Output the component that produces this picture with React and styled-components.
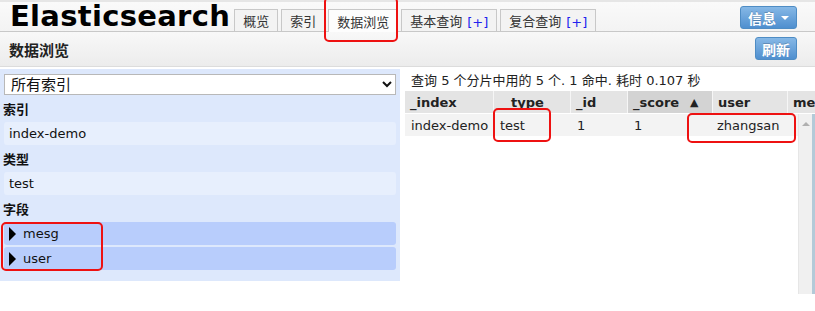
import React from 'react'
import styled, { createGlobalStyle } from 'styled-components'

const GlobalStyle = createGlobalStyle`
	body {
		margin: 0;
		background: #fff;
		font-family: "DejaVu Sans", Verdana, "Noto Sans CJK SC", sans-serif;
		font-size: 13px;
		color: #222;
	}
`

const Page = styled('div')`
	position: relative;
	width: 815px;
	height: 311px;
	overflow: hidden;
`

const Header = styled('div')`
	display: flex;
	align-items: flex-end;
	height: 29px;
	padding: 0 18px 0 10px;
	background: linear-gradient(#fafafa, #f3f3f3);
	border-top: 2px solid #e6e6e6;
	border-bottom: 1px solid #c8c8c8;
`

const Title = styled('h1')`
	align-self: center;
	margin: 0;
	font-size: 29px;
	letter-spacing: 0.3px;
	font-weight: bold;
	line-height: 29px;
	color: #000;
	white-space: nowrap;
`

const Tabs = styled('div')`
	display: flex;
	gap: 3px;
	margin-left: 4px;
`

const Tab = styled('div')`
	display: flex;
	align-items: flex-end;
	padding: 0 8px 1px;
	border: 1px solid #c8c8c8;
	border-bottom: none;
	background: ${p => (p.$active ? '#fdfdfd' : '#f3f3f3')};
	color: #333;
	font-size: 13px;
	margin-bottom: ${p => (p.$active ? '-1px' : '0')};
	height: ${p => (p.$active ? '23px' : '22px')};
	box-sizing: border-box;
`

const Plus = styled('span')`
	color: #2222ee;
	margin-left: 5px;
`

const BlueButton = styled('button')`
	display: flex;
	align-items: center;
	gap: 5px;
	height: 23px;
	padding: 0 7px;
	border: 1px solid #4e8cc4;
	border-radius: 3px;
	background: linear-gradient(#86b8e6, #4f8fcf);
	color: #fff;
	font-family: inherit;
	font-size: 14px;
	font-weight: bold;
	text-shadow: 0 -1px 0 rgba(0, 0, 0, 0.2);
`

const InfoButton = styled(BlueButton)`
	margin-left: auto;
	margin-bottom: 2px;
`

const Caret = styled('span')`
	width: 0;
	height: 0;
	border-left: 4px solid transparent;
	border-right: 4px solid transparent;
	border-top: 4px solid #fff;
`

const Toolbar = styled('div')`
	display: flex;
	align-items: center;
	height: 34px;
	padding: 0 18px 0 9px;
	background: linear-gradient(#f8f8f8, #ececec);
	border-bottom: 1px solid #dcdcdc;
`

const ToolbarTitle = styled('h2')`
	margin: 0;
	font-size: 15px;
	font-weight: bold;
	color: #222;
`

const RefreshButton = styled(BlueButton)`
	margin-left: auto;
	padding: 0 6px;
	margin-top: -1px;
`

const Body = styled('div')`
	display: flex;
	gap: 5px;
	margin-top: 2px;
`

const Sidebar = styled('div')`
	width: 392px;
	height: 204px;
	padding: 5px 4px 3px;
	background: #dde8fc;
	display: flex;
	flex-direction: column;
`

const Select = styled('select')`
	width: 392px;
	height: 21px;
	font-family: inherit;
	font-size: 15px;
	color: #111;
	background: #fff;
	border: 1px solid #b8b8b8;
	padding: 0 2px;
`

const Label = styled('div')`
	display: flex;
	align-items: flex-end;
	height: 27px;
	padding-bottom: 4px;
	box-sizing: border-box;
	font-weight: bold;
	font-size: 13px;
	margin-left: -1px;
	color: #111;
`

const Item = styled('div')`
	display: flex;
	align-items: center;
	gap: 7px;
	height: 23px;
	padding-left: 5px;
	border-radius: 3px;
	background: ${p => (p.$field ? '#b8cdfc' : '#e7effd')};
	margin-bottom: ${p => (p.$field ? '2px' : '0')};
	font-size: 13px;
	color: #111;
`

const Arrow = styled('span')`
	width: 0;
	height: 0;
	border-top: 7px solid transparent;
	border-bottom: 7px solid transparent;
	border-left: 7px solid #000;
`

const Results = styled('div')`
	flex: 1;
	display: flex;
	flex-direction: column;
	min-width: 0;
`

const Summary = styled('div')`
	height: 22px;
	line-height: 24px;
	padding-left: 6px;
	font-size: 13px;
	color: #222;
`

const HeadRow = styled('div')`
	display: flex;
	height: 22px;
	background: #e4e4e4;
`

const HeadCell = styled('div')`
	width: ${p => p.$w}px;
	flex: none;
	display: flex;
	align-items: center;
	gap: 11px;
	padding-left: ${p => p.$pad || 5}px;
	box-sizing: border-box;
	border-right: 1px solid #f6f6f6;
	background: ${p => (p.$sorted ? '#d3d3d3' : 'transparent')};
	font-weight: bold;
	font-size: 13px;
	color: #222;
	white-space: nowrap;
	overflow: hidden;
`

const Up = styled('span')`
	font-size: 11px;
`

const BodyArea = styled('div')`
	display: flex;
	height: 180px;
	margin-top: 1px;
`

const Rows = styled('div')`
	flex: 1;
`

const Row = styled('div')`
	display: flex;
	height: 22px;
	background: #f3f3f3;
`

const Cell = styled('div')`
	width: ${p => p.$w}px;
	flex: none;
	display: flex;
	align-items: center;
	padding-left: ${p => p.$pad}px;
	box-sizing: border-box;
	font-size: 13px;
	color: #222;
	white-space: nowrap;
`

const Scrollbar = styled('div')`
	width: 17px;
	background: #f0f0f0;
	border-left: 1px solid #e6e6e6;
	border-right: 3px solid #b3cad8;
	display: flex;
	justify-content: center;
	padding-top: 8px;
	box-sizing: border-box;
`

const ScrollUp = styled('span')`
	width: 0;
	height: 0;
	border-left: 4px solid transparent;
	border-right: 4px solid transparent;
	border-bottom: 4px solid #b0b0b0;
`

const Mark = styled('div')`
	position: absolute;
	left: ${p => p.$x}px;
	top: ${p => p.$y}px;
	width: ${p => p.$w}px;
	height: ${p => p.$h}px;
	border: 2.5px solid #ee1111;
	border-radius: 5px;
	box-sizing: border-box;
	pointer-events: none;
`

const columns = [
	{ key: '_index', w: 89, cellPad: 6 },
	{ key: 'type', w: 77, pad: 17, cellPad: 6 },
	{ key: '_id', w: 57, cellPad: 6 },
	{ key: '_score', w: 85, sorted: true, cellPad: 6 },
	{ key: 'user', w: 75, cellPad: 4 },
	{ key: 'mesg', label: 'me', w: 40 }
]

const row = ['index-demo', 'test', '1', '1', 'zhangsan']

const App = () => {
	return (
		<Page>
			<GlobalStyle />
			<Header>
				<Title>Elasticsearch</Title>
				<Tabs>
					<Tab>概览</Tab>
					<Tab>索引</Tab>
					<Tab $active>数据浏览</Tab>
					<Tab>
						基本查询<Plus>[+]</Plus>
					</Tab>
					<Tab>
						复合查询<Plus>[+]</Plus>
					</Tab>
				</Tabs>
				<InfoButton>
					信息 <Caret />
				</InfoButton>
			</Header>
			<Toolbar>
				<ToolbarTitle>数据浏览</ToolbarTitle>
				<RefreshButton>刷新</RefreshButton>
			</Toolbar>
			<Body>
				<Sidebar>
					<Select defaultValue="">
						<option value="">所有索引</option>
					</Select>
					<Label>索引</Label>
					<Item>index-demo</Item>
					<Label>类型</Label>
					<Item>test</Item>
					<Label>字段</Label>
					<Item $field>
						<Arrow />
						mesg
					</Item>
					<Item $field>
						<Arrow />
						user
					</Item>
				</Sidebar>
				<Results>
					<Summary>查询 5 个分片中用的 5 个. 1 命中. 耗时 0.107 秒</Summary>
					<HeadRow>
						{columns.map(c => (
							<HeadCell key={c.key} $w={c.w} $pad={c.pad} $sorted={c.sorted}>
								{c.label || c.key}
								{c.sorted && <Up>▲</Up>}
							</HeadCell>
						))}
					</HeadRow>
					<BodyArea>
						<Rows>
							<Row>
								{row.map((value, i) => (
									<Cell key={columns[i].key} $w={columns[i].w} $pad={columns[i].cellPad}>
										{value}
									</Cell>
								))}
							</Row>
						</Rows>
						<Scrollbar>
							<ScrollUp />
						</Scrollbar>
					</BodyArea>
				</Results>
			</Body>
			<Mark $x={324} $y={-3} $w={74} $h={45} />
			<Mark $x={493} $y={108} $w={58} $h={34} />
			<Mark $x={687} $y={113} $w={109} $h={30} />
			<Mark $x={1} $y={222} $w={102} $h={49} />
		</Page>
	)
}

export default React.memo(App)
